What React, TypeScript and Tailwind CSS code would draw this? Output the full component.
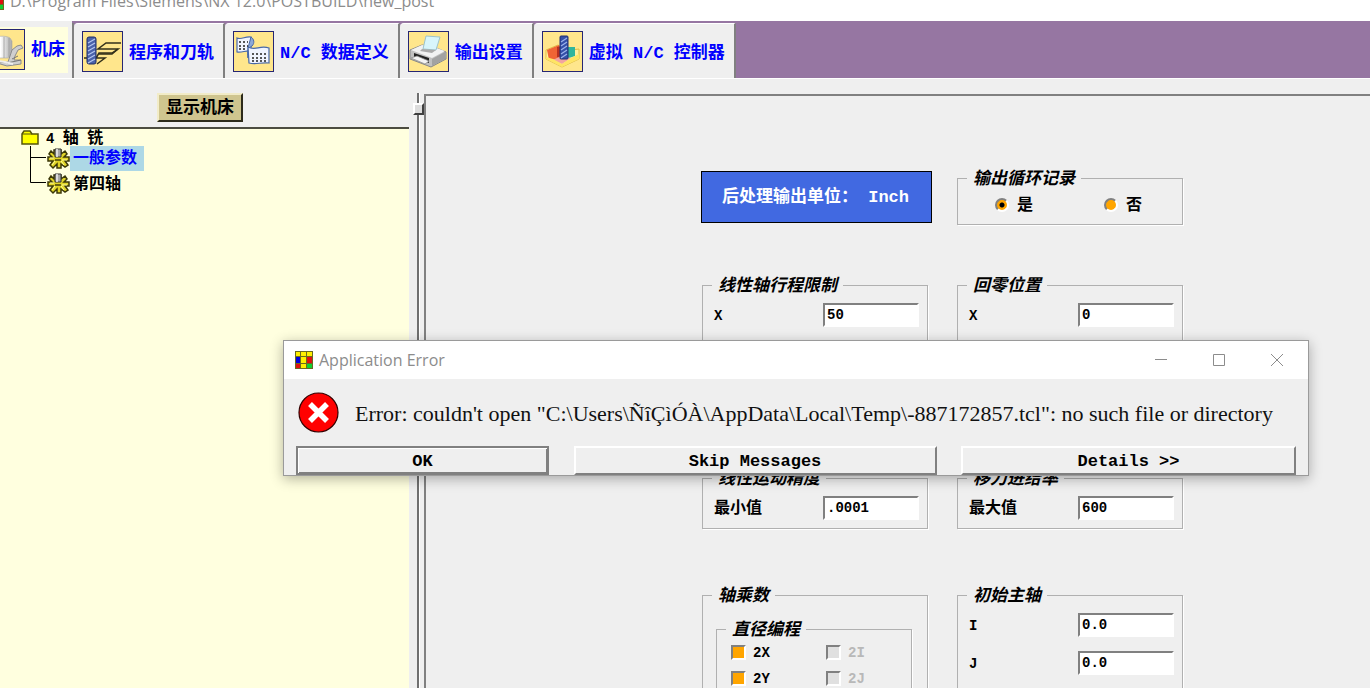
import type { ReactNode } from "react";
import clsx from "clsx";

const ui = "font-['Liberation_Mono','Noto_Sans_CJK_SC',monospace] font-bold";

function AppLogo({ className }: { className?: string }) {
  return (
    <svg viewBox="0 0 18 18" className={clsx("h-[18px] w-[18px] shrink-0", className)} aria-hidden="true">
      <rect width="18" height="18" fill="#6a6a20" />
      <rect x="1" y="1" width="4" height="4" fill="#ffef00" />
      <rect x="6" y="1" width="5" height="4" fill="#ffef00" />
      <rect x="12" y="1" width="5" height="4" fill="#ffef00" />
      <rect x="1" y="6" width="4" height="6" fill="#0000e0" />
      <rect x="6" y="6" width="5" height="6" fill="#ffef00" />
      <rect x="12" y="6" width="5" height="6" fill="#e01010" />
      <rect x="1" y="13" width="4" height="4" fill="#e01010" />
      <rect x="6" y="13" width="5" height="4" fill="#ffef00" />
      <rect x="12" y="13" width="5" height="4" fill="#10d030" />
    </svg>
  );
}

function TabIcon({ children }: { children: ReactNode }) {
  return (
    <svg
      viewBox="0 0 39 39"
      className="h-[41px] w-[41px] shrink-0 border border-[#262673] bg-[#ffe68c]"
      aria-hidden="true"
    >
      {children}
    </svg>
  );
}

function MachineIcon() {
  return (
    <TabIcon>
      <defs>
        <linearGradient id="drum" x1="0" x2="1">
          <stop offset="0" stopColor="#9a9a9a" />
          <stop offset="0.5" stopColor="#ffffff" />
          <stop offset="1" stopColor="#a8a8a8" />
        </linearGradient>
      </defs>
      <path d="M5 9c4-3 16-4 20-1l2 3v14l-4 3H7l-3-3z" fill="url(#drum)" stroke="#aaa" strokeWidth=".6" />
      <path d="M24 8v19M19 7v21" stroke="#999" strokeWidth=".8" />
      <path d="M27 20l5-4 4-1 2 3-5 2-3 6-1 4h7v4l-14 2-10-3 11-1 2-6z" fill="#cfcfcf" stroke="#8c8c8c" />
      <path d="M22 33l14-3M27 29l6-3" stroke="#777" />
      <path d="M5 30l15 2 8 2" stroke="#eee" strokeWidth="2" fill="none" />
    </TabIcon>
  );
}

function ToolpathIcon() {
  return (
    <TabIcon>
      <path d="M38 11H23l-8 6h20l-6 4H16l-3 5h9l-8 6" fill="none" stroke="#33301a" strokeWidth="1.5" />
      <path d="M35 17l-6 5H16M1 26h4" fill="none" stroke="#33301a" strokeWidth="1.5" />
      <rect x="4" y="5" width="9" height="27" rx="2" fill="#4a62aa" stroke="#1f2d66" />
      <path d="M5 11l7-4M5 15l7-4M5 19l7-4M5 23l7-4M5 27l7-4M5 31l7-4" stroke="#b4c6f0" strokeWidth="1.2" />
    </TabIcon>
  );
}

function DataIcon() {
  return (
    <TabIcon>
      <path d="M3 6c5 2 8-2 14-1v14c-5-1-9 2-14 1z" fill="#f0f4ff" stroke="#4868a8" strokeWidth="1.2" />
      <path d="M17 5c3 2 4 6 1 9-4 2-5 5-4 12V16z" fill="#8ca8d8" stroke="#4868a8" />
      <path d="M14 15c7 4 12-2 21 1v15c-8-1-13 2-20 0z" fill="#f0f4ff" stroke="#4868a8" strokeWidth="1.2" />
      <path d="M5 10h9M5 14h9M5 17h7M18 22h14M18 26h14M18 29h14" stroke="#222" strokeWidth="1.3" strokeDasharray="2 2" />
    </TabIcon>
  );
}

function PrinterIcon() {
  return (
    <TabIcon>
      <path d="M1 18l12-5 12 2 12 5v7l-15 8L1 27z" fill="#c0c0c0" stroke="#888" />
      <path d="M2 18l11-5 12 2 11 4-13 7z" fill="#f2f2f2" />
      <path d="M17 4l14 1-4 13-13-1z" fill="#d8f5fb" stroke="#9cc4cc" />
      <path d="M13 17l14 1-4 3-12-2z" fill="#aaa" />
      <path d="M5 21l15 5v5L5 25z" fill="#222" />
      <path d="M2 26l6-2 12 5-4 3z" fill="#f4f4f4" stroke="#888" strokeWidth=".7" />
      <path d="M23 27l13-7v7l-13 7z" fill="#a2a2a2" />
    </TabIcon>
  );
}

function ControllerIcon() {
  return (
    <TabIcon>
      <path d="M3 18l12-5 3 2v14l7-2 3-9 8-1v10l-17 8-16-8z" fill="#fff0a0" stroke="#e0bd48" />
      <path d="M4 18l12-5v14l-10 1z" fill="#f06434" />
      <path d="M14 15l4-1v13l-4-2z" fill="#b83020" />
      <path d="M23 15h9v9l-9 3z" fill="#30b59d" />
      <path d="M10 28l8-4 10 2-9 6z" fill="#f2a4a0" />
      <path d="M3 25l7 2 9 5 9-6 8-4v5l-17 8-16-8z" fill="#ffe565" />
      <rect x="17" y="4" width="8" height="23" rx="1" fill="#3450a8" stroke="#203070" />
      <path d="M18 10l6-4M18 14l6-4M18 18l6-4M18 22l6-4M18 26l6-4" stroke="#9db4ee" strokeWidth="1.2" />
    </TabIcon>
  );
}

function FolderIcon() {
  return (
    <svg viewBox="0 0 18 16" className="h-4 w-[18px] shrink-0" aria-hidden="true">
      <path d="M1 4l2-3h6l2 3h6v10H1z" fill="#ffff00" stroke="#55550a" strokeWidth="1.5" />
      <path d="M1 4h10" stroke="#55550a" />
    </svg>
  );
}

function GearIcon() {
  return (
    <svg viewBox="0 0 24 22" className="h-[22px] w-6 shrink-0" aria-hidden="true">
      <path
        d="M8 2h7v4l4-3 2 3-3 3h5v4h-4l3 4-3 2-4-3v4h-4v-4l-4 4-3-3 3-4H2V9h4L3 6l2-3 3 3z"
        fill="#e0d428"
        stroke="#3c3808"
        strokeWidth="1.5"
      />
      <path d="M4 10h4M16 12h5M6 17l3-4M18 17l-3-4" stroke="#ffffa0" />
      <path d="M9 1h6v8H9z" fill="#a8a8a8" stroke="#333" />
      <path d="M11 1v8" stroke="#eee" strokeWidth="1.5" />
      <path d="M9 11h6v2H9z" fill="#6a6410" />
    </svg>
  );
}

function Branch({ last }: { last?: boolean }) {
  return (
    <svg viewBox="0 0 16 25" className="h-[25px] w-4 shrink-0" aria-hidden="true">
      <path d={last ? "M.5 0V11.5H16" : "M.5 0V25M.5 11.5H16"} fill="none" stroke="#000" />
    </svg>
  );
}

const tabs = [
  { label: "程序和刀轨", icon: <ToolpathIcon /> },
  { label: "N/C 数据定义", icon: <DataIcon /> },
  { label: "输出设置", icon: <PrinterIcon /> },
  { label: "虚拟 N/C 控制器", icon: <ControllerIcon /> },
];

function TabBar() {
  return (
    <nav className="flex h-[58px] shrink-0 items-end border-b border-white bg-[#9676a2] text-[17px] leading-5 text-[#0000ff]">
      <button className="flex h-[57px] w-[72px] items-center justify-end bg-[#efefef] pr-1">
        <span className="flex h-[46px] items-center gap-[6px] bg-[#ffffdf] pr-[3px]">
          <MachineIcon />
          <span className="whitespace-nowrap pt-[2px]">机床</span>
        </span>
      </button>
      <div className="flex h-[55px] border-l-2 border-[#808080]">
        {tabs.map((tab) => (
          <button
            key={tab.label}
            className="flex items-center gap-[6px] whitespace-nowrap rounded-tl border-r-2 border-t border-r-[#808080] border-t-white bg-[#efefef] pl-2 pr-[9px] pt-px"
          >
            {tab.icon}
            <span className="pt-1">{tab.label}</span>
          </button>
        ))}
      </div>
    </nav>
  );
}

function MachineTree() {
  return (
    <aside className="flex w-[409px] shrink-0 flex-col">
      <div className="flex h-12 items-center justify-center pt-[9px] pr-[9px]">
        <button className="h-[29px] border-2 border-b-[#2c2a1a] border-l-[#f2ecc8] border-r-[#2c2a1a] border-t-[#f2ecc8] bg-[#cfc58f] px-[7px] pt-[3px] text-[17px] leading-5">
          显示机床
        </button>
      </div>
      <div className="grow border-t-2 border-[#4c4c40] bg-[#ffffdf] pl-[21px] text-base leading-5">
        <div className="flex h-[17px] items-center gap-[7px] text-sm">
          <FolderIcon />
          <span className="pt-[2px]">
            4 <span className="text-base">轴</span> <span className="text-base">铣</span>
          </span>
        </div>
        <ul className="pl-[9px]">
          <li className="flex h-[25px] items-center">
            <Branch />
            <GearIcon />
            <span className="bg-[#add8e6] pb-[2px] pl-[3px] pr-[7px] pt-1 leading-[19px] text-[#0000ff]">一般参数</span>
          </li>
          <li className="flex h-[25px] items-center">
            <Branch last />
            <GearIcon />
            <span className="pl-[3px] pt-[2px]">第四轴</span>
          </li>
        </ul>
      </div>
    </aside>
  );
}

function Group({ title, className, children }: { title: string; className?: string; children: ReactNode }) {
  return (
    <fieldset className={clsx("min-w-0 border border-[#b0b0b0] shadow-[1px_1px_0_#fff]", className)}>
      <legend className="ml-[9px] px-[6px] pt-1 text-[17px] italic leading-4">{title}</legend>
      {children}
    </fieldset>
  );
}

function Field({ label, value }: { label: string; value: string }) {
  return (
    <label className="flex h-6 items-center justify-between pl-[11px] pr-2 text-sm">
      <span className={clsx("pt-[2px] leading-5", label.length > 1 && "text-base leading-5")}>{label}</span>
      <input
        defaultValue={value}
        className="h-6 w-24 border-2 border-b-white border-l-[#808080] border-r-white border-t-[#808080] bg-white pl-[2px] outline-none"
      />
    </label>
  );
}

function RadioOption({ label, checked }: { label: string; checked?: boolean }) {
  return (
    <label className="flex items-center gap-2 text-base leading-5">
      <input
        type="radio"
        name="cycle"
        defaultChecked={checked}
        className="h-[14px] w-[14px] appearance-none rounded-full border-2 border-b-white border-l-[#808080] border-r-white border-t-[#808080] bg-[#ffa500] checked:bg-[radial-gradient(circle,#000_2px,#ffa500_3px)]"
      />
      <span className="pt-[2px]">{label}</span>
    </label>
  );
}

function CheckOption({ label, disabled }: { label: string; disabled?: boolean }) {
  return (
    <label className={clsx("flex h-[26px] items-center gap-[7px] text-sm", disabled && "text-[#b8b8b8]")}>
      <input
        type="checkbox"
        defaultChecked={!disabled}
        disabled={disabled}
        className="h-[15px] w-[15px] appearance-none border-2 border-b-white border-l-[#808080] border-r-white border-t-[#808080] bg-[#e0e0e0] checked:bg-[#ffa500]"
      />
      <span className="pt-[2px]">{label}</span>
    </label>
  );
}

function Parameters() {
  return (
    <main className="min-w-0 grow overflow-hidden border-l-2 border-t-2 border-[#808080] pl-[275px] pt-[72px]">
      <div className="grid grid-cols-[227px_226px] gap-x-[29px]">
        <div className="mt-[3px] flex h-[52px] w-[231px] items-center whitespace-pre border border-black bg-[#4169e1] pl-5 pt-[2px] text-[17px] text-white">
          后处理输出单位： Inch
        </div>
        <Group title="输出循环记录" className="h-[57px]">
          <div className="flex h-8 items-center gap-[71px] pl-[37px] pt-px">
            <RadioOption label="是" checked />
            <RadioOption label="否" />
          </div>
        </Group>

        <Group title="线性轴行程限制" className="ml-px mt-[50px] h-[155px]">
          <div className="flex flex-col gap-[14px] pt-2">
            <Field label="X" value="50" />
            <Field label="Y" value="50" />
            <Field label="Z" value="50" />
          </div>
        </Group>
        <Group title="回零位置" className="mt-[50px] h-[155px]">
          <div className="flex flex-col gap-[14px] pt-2">
            <Field label="X" value="0" />
            <Field label="Y" value="0" />
            <Field label="Z" value="0" />
          </div>
        </Group>

        <Group title="线性运动精度" className="ml-px mt-[38px] h-[61px]">
          <div className="pt-2">
            <Field label="最小值" value=".0001" />
          </div>
        </Group>
        <Group title="移刀进给率" className="mt-[38px] h-[61px]">
          <div className="pt-2">
            <Field label="最大值" value="600" />
          </div>
        </Group>

        <Group title="轴乘数" className="ml-px mt-14">
          <div className="pb-4 pl-[13px] pr-[15px] pt-[14px]">
            <Group title="直径编程">
              <div className="grid grid-cols-[95px_1fr] pl-[14px]">
                <CheckOption label="2X" />
                <CheckOption label="2I" disabled />
                <CheckOption label="2Y" />
                <CheckOption label="2J" disabled />
              </div>
            </Group>
          </div>
        </Group>
        <Group title="初始主轴" className="mt-14">
          <div className="flex flex-col gap-[14px] pb-4 pt-2">
            <Field label="I" value="0.0" />
            <Field label="J" value="0.0" />
          </div>
        </Group>
      </div>
    </main>
  );
}

function DialogButton({ className, active, children }: { className: string; active?: boolean; children: ReactNode }) {
  return (
    <button
      className={clsx(
        "h-[29px] border-2 bg-[#efefef] pt-[2px] text-[17px] leading-5",
        active
          ? "border-[#808080] shadow-[inset_1px_1px_0_#fff,inset_-1px_-1px_0_#808080]"
          : "border-b-[#808080] border-l-white border-r-[#808080] border-t-white",
        className,
      )}
    >
      {children}
    </button>
  );
}

function ErrorDialog() {
  return (
    <div
      role="dialog"
      aria-label="Application Error"
      className="absolute left-[283px] top-[340px] w-[1026px] border border-[#9a9a9a] bg-[#efefef] shadow-[0_3px_12px_rgba(0,0,0,0.3)]"
    >
      <div className="flex h-[38px] items-center bg-white pl-[11px] pr-[2px] font-['Open_Sans',sans-serif] font-normal text-[#8c8c8c]">
        <AppLogo />
        <span className="grow pl-[6px] text-base leading-5">Application Error</span>
        <button aria-label="Minimize" className="flex w-[58px] justify-center">
          <svg viewBox="0 0 12 12" className="h-3 w-3">
            <path d="M0 5.5h12" stroke="#8c8c8c" />
          </svg>
        </button>
        <button aria-label="Maximize" className="flex w-[58px] justify-center">
          <svg viewBox="0 0 12 12" className="h-3 w-3">
            <path d="M.5.5h11v11H.5z" fill="none" stroke="#8c8c8c" />
          </svg>
        </button>
        <button aria-label="Close" className="flex w-[58px] justify-center">
          <svg viewBox="0 0 12 12" className="h-3 w-3">
            <path d="M0 0l12 12M12 0L0 12" stroke="#8c8c8c" />
          </svg>
        </button>
      </div>
      <div className="flex h-[67px] items-center gap-4 pl-[14px] font-['Liberation_Serif',serif] text-[22px] font-normal text-[#111]">
        <svg viewBox="0 0 41 41" className="h-[41px] w-[41px] shrink-0" aria-hidden="true">
          <circle cx="20.5" cy="20.5" r="19.5" fill="#ff0000" stroke="#300" strokeWidth="1.2" />
          <path d="M12 12l17 17M29 12L12 29" stroke="#fff" strokeWidth="5.5" />
        </svg>
        <span className="whitespace-nowrap pt-[2px]">
          Error: couldn't open "C:\Users\ÑîÇìÓÀ\AppData\Local\Temp\-887172857.tcl": no such file or directory
        </span>
      </div>
      <div className="flex justify-between px-3">
        <DialogButton className="w-[253px]" active>
          OK
        </DialogButton>
        <DialogButton className="w-[363px]">Skip Messages</DialogButton>
        <DialogButton className="w-[335px]">Details &gt;&gt;</DialogButton>
      </div>
    </div>
  );
}

export default function App() {
  return (
    <div className={clsx("relative flex h-screen flex-col overflow-hidden bg-[#efefef] text-black", ui)}>
      <header className="flex h-[21px] shrink-0 overflow-hidden bg-white font-['Open_Sans',sans-serif] text-base font-normal leading-6 text-[#8c8c8c]">
        <AppLogo className="-ml-[14px] -mt-2" />
        <span className="-mt-[11px] pl-[6px]">D:\Program Files\Siemens\NX 12.0\POSTBUILD\new_post</span>
      </header>
      <TabBar />
      <div className="flex min-h-0 grow">
        <MachineTree />
        <div className="relative mt-[14px] w-[15px] shrink-0">
          <div className="ml-2 h-full w-[3px] border-l-2 border-r border-l-[#707070] border-r-white" />
          <div className="absolute left-1 top-[10px] h-3 w-[11px] border-2 border-b-[#404040] border-l-white border-r-[#404040] border-t-white bg-[#dcdcdc]" />
        </div>
        <div className="flex min-w-0 grow pt-[15px]">
          <Parameters />
        </div>
      </div>
      <ErrorDialog />
    </div>
  );
}
